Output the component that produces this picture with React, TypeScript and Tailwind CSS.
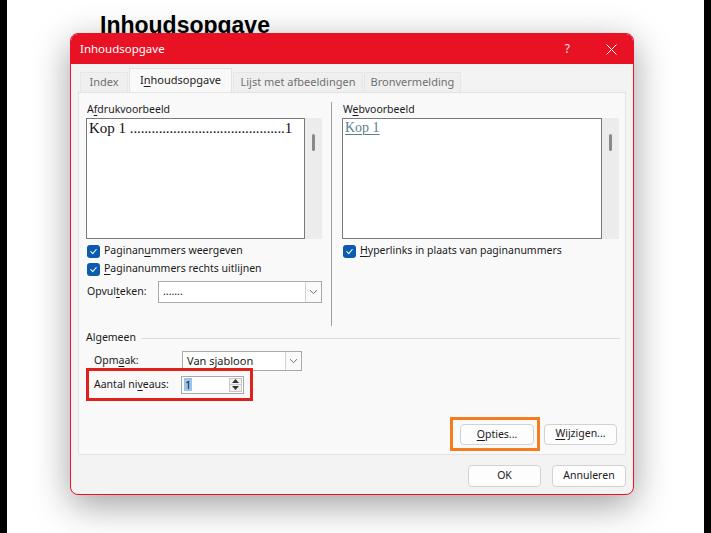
import { ReactNode } from "react";

/* ---------------- small pieces ---------------- */

// letter with keyboard mnemonic underline
const K = ({ children }: { children: ReactNode }) => (
  <span className="underline decoration-1 underline-offset-2">{children}</span>
);

const Check = ({ children }: { children: ReactNode }) => (
  <div className="flex h-[16px] items-center gap-[4px]">
    <span className="flex h-[13px] w-[13px] items-center justify-center rounded-[3px] bg-[#0b5cad]">
      <svg width="9" height="9" viewBox="0 0 10 10" fill="none">
        <path d="M2 5.2 4.2 7.3 8 2.8" stroke="white" strokeWidth="1.2" strokeLinecap="round" strokeLinejoin="round" />
      </svg>
    </span>
    <span className="text-[#1b1b1b]">{children}</span>
  </div>
);

const Chevron = () => (
  <svg width="9" height="6" viewBox="0 0 9 6" fill="none">
    <path d="M1 1.2 4.5 4.6 8 1.2" stroke="#6f6f6f" strokeWidth="1" />
  </svg>
);

const Select = ({ value, className }: { value: string; className: string }) => (
  <div className={`flex items-stretch border border-[#a9a9a9] bg-white ${className}`}>
    <div className="flex flex-1 items-center pl-[4px] text-[#1b1b1b]">{value}</div>
    <div className="flex w-[16px] items-center justify-center border-l border-[#d4d4d4] bg-[#fafafa]">
      <Chevron />
    </div>
  </div>
);

const Button = ({ children, className = "" }: { children: ReactNode; className?: string }) => (
  <div
    className={`flex h-[21px] items-center justify-center rounded-[4px] border border-[#d2d2d2] bg-[#fdfdfd] text-[#1b1b1b] ${className}`}
  >
    {children}
  </div>
);

const Tab = ({ children, active, w }: { children: ReactNode; active?: boolean; w: string }) =>
  active ? (
    <div className={`flex h-[24px] items-center justify-center border border-b-0 border-[#e3e3e3] bg-[#f9f9f9] text-[11px] text-[#1b1b1b] ${w}`}>
      {children}
    </div>
  ) : (
    <div className={`flex h-[20px] items-center justify-center border border-b-0 border-[#e6e6e6] bg-[#efefef] text-[11px] text-[#707070] ${w}`}>
      {children}
    </div>
  );

const Preview = ({ children, w }: { children: ReactNode; w: string }) => (
  <div className="flex h-[121px]">
    <div className={`h-full border border-[#7a7a7a] bg-white ${w}`}>{children}</div>
    <div className="h-full w-[17px] bg-[#ececec] pl-[7px] pt-[16px]">
      <div className="h-[17px] w-[3px] rounded-full bg-[#8a8a8a]" />
    </div>
  </div>
);

const LEADER = ".".repeat(43);

/* ---------------- dialog ---------------- */

function TocDialog() {
  return (
    <div className="absolute left-[70px] top-[33px] flex h-[462px] w-[564px] flex-col overflow-hidden rounded-[8px] border border-[#e81224] bg-[#f3f3f3] font-['Noto_Sans',sans-serif] text-[10.5px] shadow-[0_10px_36px_rgba(0,0,0,0.38)]">
      {/* Title bar */}
      <div className="flex h-[30px] shrink-0 items-center bg-[#e81224] pl-[9px] pr-[16px] text-[11.5px] text-white">
        <span className="flex-1">Inhoudsopgave</span>
        <span className="mr-[36px] text-[12px] opacity-90">?</span>
        <svg width="11" height="11" viewBox="0 0 11 11">
          <path d="M0.5 0.5 10.5 10.5M10.5 0.5 0.5 10.5" stroke="white" strokeWidth="1" />
        </svg>
      </div>

      {/* Body */}
      <div className="flex flex-1 flex-col px-[7px]">
        {/* Tabs */}
        <div className="mt-[4px] flex h-[24px] items-end gap-[1px] pl-[2px]">
          <Tab w="w-[48px]">Index</Tab>
          <Tab active w="w-[103px]">
            I<K>n</K>houdsopgave
          </Tab>
          <Tab w="w-[130px]">Lijst met afbeeldingen</Tab>
          <Tab w="w-[97px]">Bronvermelding</Tab>
        </div>

        {/* Tab panel */}
        <div className="flex h-[363px] flex-col border border-[#e3e3e3] bg-[#f9f9f9]">
          <div className="flex">
            {/* Afdrukvoorbeeld */}
            <div className="flex w-[243px] flex-col pl-[7px] pt-[8px]">
              <div className="mb-[1px] h-[16px] pl-[1px] leading-[16px] text-[#1b1b1b]">
                A<K>f</K>drukvoorbeeld
              </div>
              <Preview w="w-[219px]">
                <div className="whitespace-nowrap px-[2px] font-['Liberation_Serif',serif] text-[15px] leading-[18px] text-[#111]">
                  Kop 1 <span className="tracking-[-0.15px]">{LEADER}</span>1
                </div>
              </Preview>
              <div className="mt-[4px] flex flex-col gap-[2px] pl-[1px]">
                <Check>
                  Paginan<K>u</K>mmers weergeven
                </Check>
                <Check>
                  <K>P</K>aginanummers rechts uitlijnen
                </Check>
              </div>
              <div className="mt-[4px] flex h-[22px] items-center pl-[1px]">
                <span className="w-[71px] text-[#1b1b1b]">
                  Opvul<K>t</K>eken:
                </span>
                <Select value="......." className="h-[22px] w-[164px]" />
              </div>
            </div>

            {/* Separator */}
            <div className="ml-[9px] mt-[9px] h-[224px] w-px bg-[#9d9d9d]" />

            {/* Webvoorbeeld */}
            <div className="ml-[10px] flex flex-col pt-[8px]">
              <div className="mb-[1px] h-[16px] pl-[1px] leading-[16px] text-[#1b1b1b]">
                W<K>e</K>bvoorbeeld
              </div>
              <Preview w="w-[260px]">
                <div className="px-[2px] font-['Liberation_Serif',serif] text-[14px] leading-[18px] text-[#5b7f8c]">
                  <span className="underline decoration-1 underline-offset-2">Kop 1</span>
                </div>
              </Preview>
              <div className="mt-[4px] pl-[1px]">
                <Check>
                  <K>H</K>yperlinks in plaats van paginanummers
                </Check>
              </div>
            </div>
          </div>

          {/* Algemeen */}
          <div className="mt-[4px] flex h-[16px] items-center pl-[7px] pr-[5px]">
            <span className="text-[#1b1b1b]">Algemeen</span>
            <div className="ml-[5px] h-px flex-1 bg-[#dcdcdc]" />
          </div>
          <div className="mt-[5px] flex h-[20px] items-center pl-[15px]">
            <span className="w-[88px] text-[#1b1b1b]">
              Opm<K>a</K>ak:
            </span>
            <Select value="Van sjabloon" className="h-[20px] w-[120px] text-[11px]" />
          </div>
          <div className="relative -mt-[3px] ml-[7px] flex h-[33px] w-[167px] items-center border-[3px] border-[#e0221d] pl-[5px]">
            <span className="w-[87px] text-[#1b1b1b]">
              Aantal ni<K>v</K>eaus:
            </span>
            <div className="flex h-[18px] w-[63px] items-stretch border border-[#a9a9a9] bg-white">
              <div className="flex flex-1 items-center pl-[2px]">
                <span className="bg-[#9cc3e8] px-[1px] text-[11px] leading-[13px] text-[#10243a]">1</span>
              </div>
              <div className="my-[1px] mr-[1px] flex w-[13px] flex-col border border-[#c9c9c9] bg-[#f1f1f1]">
                <div className="flex flex-1 items-center justify-center border-b border-[#c9c9c9]">
                  <svg width="7" height="4" viewBox="0 0 7 4">
                    <path d="M0 4 3.5 0 7 4Z" fill="#333" />
                  </svg>
                </div>
                <div className="flex flex-1 items-center justify-center">
                  <svg width="7" height="4" viewBox="0 0 7 4">
                    <path d="M0 0 3.5 4 7 0Z" fill="#333" />
                  </svg>
                </div>
              </div>
            </div>
          </div>

          {/* Opties / Wijzigen */}
          <div className="mt-[16px] flex items-center justify-end gap-[4px] pr-[8px]">
            <div className="border-[3px] border-[#f47b1f] pb-[3px] pl-[7px] pr-[3px] pt-[4px]">
              <Button className="w-[74px]">
                <K>O</K>pties...
              </Button>
            </div>
            <Button className="w-[73px]">
              <K>W</K>ijzigen...
            </Button>
          </div>
        </div>

        {/* OK / Annuleren */}
        <div className="mt-[10px] flex justify-end gap-[11px]">
          <Button className="h-[22px] w-[73px] border-[#3c7fae]">OK</Button>
          <Button className="h-[22px] w-[74px]">Annuleren</Button>
        </div>
      </div>
    </div>
  );
}

/* ---------------- page ---------------- */

export default function App() {
  return (
    <div className="relative flex h-[533px] w-[711px] overflow-hidden bg-black">
      <div className="mx-[7px] flex-1 bg-white pl-[93px] pt-[14px]">
        <h1 className="font-['Liberation_Sans',sans-serif] text-[23px] font-bold leading-none text-black">
          Inhoudsopgave
        </h1>
      </div>
      <TocDialog />
    </div>
  );
}
